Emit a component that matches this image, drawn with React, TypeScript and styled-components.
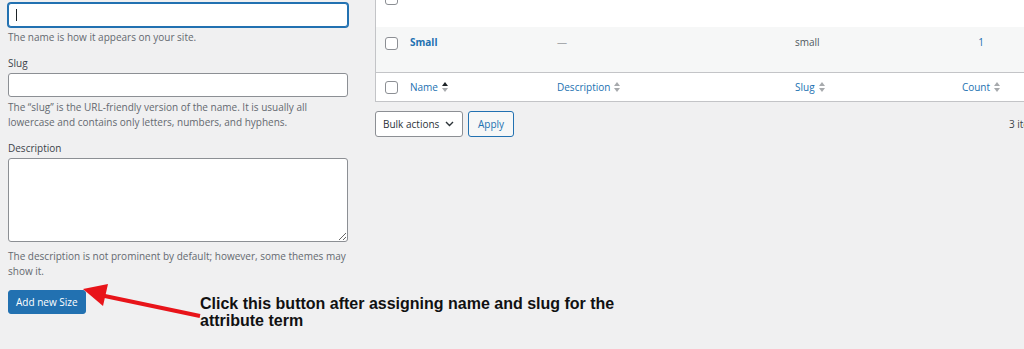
import styled, { createGlobalStyle } from "styled-components";

const GlobalStyle = createGlobalStyle`
  html, body {
    margin: 0;
    padding: 0;
    background: #f0f0f1;
    overflow: hidden;
  }
  body {
    font-family: "Open Sans", "Noto Sans", sans-serif;
    color: #3c434a;
  }
`;

const Page = styled.div`
  display: flex;
  width: 1024px;
  height: 349px;
  padding-left: 8px;
  box-sizing: border-box;
  overflow: hidden;
`;

const FormColumn = styled.div`
  display: flex;
  flex-direction: column;
  width: 340px;
  flex-shrink: 0;
  padding-top: 3px;
`;

const Field = styled.div<{ $gap?: number }>`
  display: flex;
  flex-direction: column;
  margin-bottom: ${(p) => p.$gap ?? 11}px;
`;

const Label = styled.label`
  font-size: 10px;
  line-height: 15px;
  color: #3c434a;
  margin-bottom: 2px;
`;

const InputWrap = styled.div`
  position: relative;
`;

const TextInput = styled.input<{ $focused?: boolean }>`
  display: block;
  width: 100%;
  height: 24px;
  box-sizing: border-box;
  border: 1px solid ${(p) => (p.$focused ? "#2271b1" : "#8c8f94")};
  box-shadow: ${(p) => (p.$focused ? "0 0 0 1px #2271b1" : "none")};
  border-radius: 3px;
  background: #fff;
  outline: none;
`;

const Caret = styled.span`
  position: absolute;
  left: 8px;
  top: 6px;
  width: 1px;
  height: 12px;
  background: #1d2327;
`;

const TextArea = styled.textarea`
  display: block;
  width: 100%;
  height: 84px;
  box-sizing: border-box;
  border: 1px solid #8c8f94;
  border-radius: 3px;
  background: #fff;
  resize: vertical;
  outline: none;
`;

const Help = styled.p<{ $top?: number }>`
  margin: ${(p) => p.$top ?? 3}px 0 0;
  font-size: 10px;
  line-height: 15px;
  color: #646970;
`;

const SubmitRow = styled.div`
  position: relative;
  display: flex;
  align-items: flex-start;
  margin-top: 11px;
`;

const PrimaryButton = styled.button`
  height: 24px;
  padding: 0 7px;
  border: 1px solid #2271b1;
  border-radius: 3px;
  background: #2271b1;
  color: #fff;
  font-family: inherit;
  font-size: 10px;
  line-height: 22px;
`;

const Note = styled.div`
  position: absolute;
  left: 192px;
  top: 5px;
  width: 440px;
  font-family: "Liberation Sans", Arial, sans-serif;
  font-weight: bold;
  font-size: 16px;
  line-height: 17px;
  color: #111;
`;

const ArrowSvg = styled.svg`
  position: absolute;
  left: 62px;
  top: -10px;
  overflow: visible;
`;

const ListColumn = styled.div`
  display: flex;
  flex-direction: column;
  width: 668px;
  flex-shrink: 0;
  margin-left: 27px;
`;

const Table = styled.div`
  border: 1px solid #c3c4c7;
  border-top: none;
  background: #fff;
`;

const Row = styled.div<{ $striped?: boolean; $foot?: boolean; $cut?: boolean }>`
  display: grid;
  grid-template-columns: 34px 147px 238px 150px 72px 1fr;
  align-items: ${(p) => (p.$foot ? "center" : "start")};
  height: ${(p) => (p.$foot ? 29 : 45)}px;
  box-sizing: border-box;
  padding-top: ${(p) => (p.$foot ? 0 : 8)}px;
  margin-top: ${(p) => (p.$cut ? -18 : 0)}px;
  background: ${(p) => (p.$striped ? "#f6f7f7" : "#fff")};
  border-top: ${(p) => (p.$foot ? "1px solid #c3c4c7" : "none")};
  font-size: 10px;
  line-height: 15px;
`;

const CheckCell = styled.div`
  padding-left: 9px;
  display: flex;
`;

const Checkbox = styled.span<{ $top?: number }>`
  display: block;
  width: 13px;
  height: 13px;
  box-sizing: border-box;
  margin-top: ${(p) => p.$top ?? 0}px;
  border: 1px solid #8c8f94;
  border-radius: 3px;
  background: #fff;
`;

const Cell = styled.div<{ $center?: boolean; $tone?: "link" | "muted" | "plain" }>`
  text-align: ${(p) => (p.$center ? "center" : "left")};
  color: ${(p) =>
    p.$tone === "link" ? "#2271b1" : p.$tone === "muted" ? "#a7aaad" : "#50575e"};
  white-space: nowrap;
`;

const TermName = styled.a`
  color: #2271b1;
  font-weight: 700;
  text-decoration: none;
`;

const SortLink = styled.span<{ $center?: boolean }>`
  display: flex;
  align-items: center;
  justify-content: ${(p) => (p.$center ? "center" : "flex-start")};
  gap: 4px;
  color: #2271b1;
  white-space: nowrap;
`;

const TableNav = styled.div`
  display: flex;
  align-items: center;
  gap: 5px;
  margin-top: 9px;
  height: 26px;
  font-size: 10px;
`;

const Select = styled.div`
  display: flex;
  align-items: center;
  gap: 6px;
  height: 26px;
  box-sizing: border-box;
  padding: 0 6px 0 7px;
  border: 1px solid #8c8f94;
  border-radius: 3px;
  background: #fff;
  color: #2c3338;
  width: 88px;
`;

const SecondaryButton = styled.button`
  height: 26px;
  padding: 0 9px;
  border: 1px solid #2271b1;
  border-radius: 3px;
  background: #f6f7f7;
  color: #2271b1;
  font-family: inherit;
  font-size: 10px;
`;

const Count = styled.span`
  margin-left: auto;
  color: #3c434a;
`;

function SortIcon({ active }: { active?: boolean }) {
  return (
    <svg width="6" height="10" viewBox="0 0 6 10">
      <path d="M0 4 L3 0 L6 4 Z" fill={active ? "#1d2327" : "#a7aaad"} />
      <path d="M0 6 L3 10 L6 6 Z" fill="#a7aaad" />
    </svg>
  );
}

function Chevron() {
  return (
    <svg width="9" height="6" viewBox="0 0 9 6">
      <path d="M1 1 L4.5 4.5 L8 1" fill="none" stroke="#2c3338" strokeWidth="1.4" />
    </svg>
  );
}

export default function App() {
  return (
    <>
      <GlobalStyle />
      <Page>
        <FormColumn>
          <Field>
            <InputWrap>
              <TextInput $focused defaultValue="" />
              <Caret />
            </InputWrap>
            <Help>The name is how it appears on your site.</Help>
          </Field>
          <Field>
            <Label>Slug</Label>
            <TextInput />
            <Help>
              The “slug” is the URL-friendly version of the name. It is usually all lowercase and
              contains only letters, numbers, and hyphens.
            </Help>
          </Field>
          <Field $gap={0}>
            <Label>Description</Label>
            <TextArea />
            <Help $top={7}>
              The description is not prominent by default; however, some themes may show it.
            </Help>
          </Field>
          <SubmitRow>
            <PrimaryButton>Add new Size</PrimaryButton>
            <ArrowSvg width="140" height="40" viewBox="0 0 140 40">
              <line x1="30" y1="15" x2="130" y2="36" stroke="#e8141a" strokeWidth="4" />
              <polygon points="13,9 38,4 33,26" fill="#e8141a" />
            </ArrowSvg>
            <Note>
              Click this button after assigning name and slug for the attribute term
            </Note>
          </SubmitRow>
        </FormColumn>

        <ListColumn>
          <Table>
            <Row $cut>
              <CheckCell>
                <Checkbox $top={2} />
              </CheckCell>
            </Row>
            <Row $striped>
              <CheckCell>
                <Checkbox $top={2} />
              </CheckCell>
              <Cell>
                <TermName>Small</TermName>
              </Cell>
              <Cell $tone="muted">—</Cell>
              <Cell>small</Cell>
              <Cell $tone="link" $center>
                1
              </Cell>
            </Row>
            <Row $foot>
              <CheckCell>
                <Checkbox />
              </CheckCell>
              <SortLink>
                Name <SortIcon active />
              </SortLink>
              <SortLink>
                Description <SortIcon />
              </SortLink>
              <SortLink>
                Slug <SortIcon />
              </SortLink>
              <SortLink $center>
                Count <SortIcon />
              </SortLink>
            </Row>
          </Table>
          <TableNav>
            <Select>
              Bulk actions <Chevron />
            </Select>
            <SecondaryButton>Apply</SecondaryButton>
            <Count>3 items</Count>
          </TableNav>
        </ListColumn>
      </Page>
    </>
  );
}
